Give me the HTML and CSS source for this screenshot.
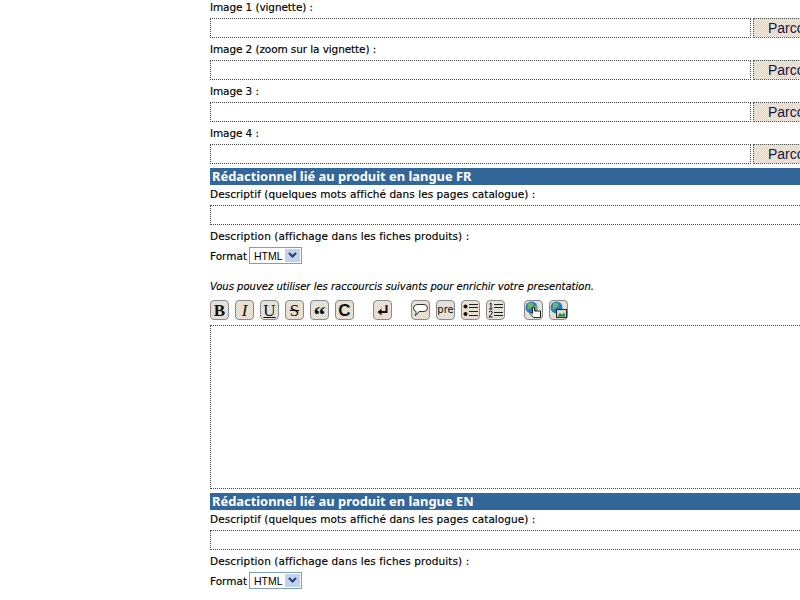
FILE: index.html
```html
<!DOCTYPE html>
<html lang="fr">
<head>
    <meta charset="UTF-8">
    <title>Produit</title>
    <link rel="stylesheet" href="styles.css">
</head>
<body>
    <form class="form">
        <div class="label">Image 1 (vignette) :</div>
        <div class="file-row"><input class="field file-field" type="text"><button class="browse" type="button">Parcourir...</button></div>
        <div class="label">Image 2 (zoom sur la vignette) :</div>
        <div class="file-row"><input class="field file-field" type="text"><button class="browse" type="button">Parcourir...</button></div>
        <div class="label">Image 3 :</div>
        <div class="file-row"><input class="field file-field" type="text"><button class="browse" type="button">Parcourir...</button></div>
        <div class="label">Image 4 :</div>
        <div class="file-row"><input class="field file-field" type="text"><button class="browse" type="button">Parcourir...</button></div>

        <h2 class="banner">Rédactionnel lié au produit en langue FR</h2>
        <div class="label after-banner">Descriptif (quelques mots affiché dans les pages catalogue) :</div>
        <input class="field wide-field" type="text">
        <div class="label desc-label">Description (affichage dans les fiches produits) :</div>
        <div class="format-row">Format <span class="select"><span class="select-value">HTML</span><span class="select-arrow"><svg width="9" height="7" viewBox="0 0 9 7"><path d="M1 1 4.500 4.500 8 1" fill="none" stroke="#2f3f6f" stroke-width="2.200"/></svg></span></span></div>
        <p class="hint">Vous pouvez utiliser les raccourcis suivants pour enrichir votre presentation.</p>
        <div class="toolbar">
            <div class="tool-group">
                <span class="tool tool-b">B</span>
                <span class="tool tool-i">I</span>
                <span class="tool tool-u">U</span>
                <span class="tool tool-s">S</span>
                <span class="tool tool-q">“</span>
                <span class="tool tool-c">C</span>
            </div>
            <div class="tool-group">
                <span class="tool"><svg width="13" height="13" viewBox="0 0 13 13"><path d="M10.500 1V8H3" fill="none" stroke="#111" stroke-width="2"/><path d="M5.500 4.500V11.500L1.500 8Z" fill="#111"/></svg></span>
            </div>
            <div class="tool-group">
                <span class="tool"><svg width="17" height="15" viewBox="0 0 17 15"><path d="M5 1.500H12Q15.500 1.500 15.500 5T12 8.500H7Q5.500 11.500 3 12.500 4.500 10.500 4 8.500 1.500 8 1.500 5T5 1.500Z" fill="#fff" stroke="#333"/></svg></span>
                <span class="tool tool-pre">pre</span>
                <span class="tool"><svg width="16" height="16" viewBox="0 0 16 16"><circle cx="2.500" cy="4.500" r="2" fill="#111"/><circle cx="2.500" cy="12" r="2" fill="#111"/><path d="M6 2.500H15M6 5.500H15M6 9.500H15M6 13.500H15" stroke="#222"/></svg></span>
                <span class="tool"><svg width="16" height="16" viewBox="0 0 16 16"><path d="M6 2.500H15M6 5.500H15M6 10.500H15M6 13.500H15" stroke="#222"/><path d="M1.500 2 3 1V7M1 7H4.500M1 10Q2.500 8.500 4 9.500T2.500 13L1 15H4.500" fill="none" stroke="#111"/></svg></span>
            </div>
            <div class="tool-group">
                <span class="tool"><svg width="17" height="18" viewBox="0 0 17 18"><circle cx="6.500" cy="6.500" r="6" fill="#2a78c8"/><path d="M3 2.500Q6 .5 8 2.500T6 7 2.500 8ZM9 5l3-.5 .5 3L10 9Z" fill="#6cb56a"/><path d="M7.500 6.500H9.500V10H15.500V16.500H8.500L5 12.500 6 11.500 7.500 12.500Z" fill="#fff" stroke="#222"/></svg></span>
                <span class="tool"><svg width="17" height="18" viewBox="0 0 17 18"><circle cx="6.500" cy="6.500" r="6" fill="#2a78c8"/><path d="M3 2.500Q6 .5 8 2.500T6 7 2.500 8Z" fill="#6cb56a"/><rect x="6.500" y="8.500" width="10" height="8" fill="#cfe3c8" stroke="#223"/><path d="M7.500 15.500 10 12 12 14 14 11.500 15.500 15.500Z" fill="#2f7a4a"/></svg></span>
            </div>
        </div>
        <textarea class="field editor"></textarea>

        <h2 class="banner">Rédactionnel lié au produit en langue EN</h2>
        <div class="label after-banner">Descriptif (quelques mots affiché dans les pages catalogue) :</div>
        <input class="field wide-field" type="text">
        <div class="label desc-label">Description (affichage dans les fiches produits) :</div>
        <div class="format-row">Format <span class="select"><span class="select-value">HTML</span><span class="select-arrow"><svg width="9" height="7" viewBox="0 0 9 7"><path d="M1 1 4.500 4.500 8 1" fill="none" stroke="#2f3f6f" stroke-width="2.200"/></svg></span></span></div>
    </form>
</body>
</html>
```

FILE: styles.css
```css
html, body {
    margin: 0;
    height: 600px;
    overflow: hidden;
    background-color: #fff;
}

body {
    font-family: 'DejaVu Sans', Verdana, sans-serif;
    font-size: 10.5px;
    color: #000;
    -webkit-text-stroke: 0.15px #000;
}

/* the form is wider than the window, the right side is cut off */
.form {
    width: 640px;
    margin-left: 210px;
}

.label {
    height: 14px;
    line-height: 14px;
    letter-spacing: -0.1px;
}

.file-row {
    display: flex;
    gap: 2px;
    margin-top: 4px;
    margin-bottom: 4px;
    height: 20px;
}

.field {
    display: block;
    box-sizing: border-box;
    margin: 0;
    padding: 0;
    background: #fff;
    border: 1px dotted #444;
    border-radius: 0;
    outline: none;
    resize: none;
}

.file-field {
    width: 541px;
    height: 20px;
}

.wide-field {
    width: 100%;
    height: 20px;
    margin-top: 4px;
}

.editor {
    width: 100%;
    height: 164px;
    margin-top: 5px;
}

/* dithered background of the old buttons */
.browse,
.tool {
    background-color: #ece9d8;
    background-image:
        repeating-conic-gradient(rgba(255, 190, 215, 0.35) 0 25%, rgba(190, 235, 200, 0.35) 0 50%),
        repeating-conic-gradient(#fdf8e4 0 25%, #d3d8cc 0 50%);
    background-size: 3px 3px, 2px 2px;
}

.browse {
    width: 90px;
    height: 20px;
    margin: 0;
    padding: 0 0 0 14px;
    border: 1px dotted #555;
    white-space: nowrap;
    text-align: left;
    font-family: 'Liberation Sans', Arial, sans-serif;
    font-size: 14px;
    color: #14143c;
    -webkit-text-stroke: 0;
}

.banner {
    height: 17px;
    line-height: 17px;
    margin: 0;
    padding-left: 2px;
    background-color: #336699;
    color: #fff;
    font-family: 'Noto Sans', 'DejaVu Sans', sans-serif;
    font-size: 12.9px;
    font-weight: bold;
    -webkit-text-stroke: 0;
}

.editor + .banner {
    margin-top: 4px;
}

.after-banner {
    margin-top: 2px;
    letter-spacing: 0.05px;
}

.desc-label {
    margin-top: 4px;
    letter-spacing: 0.1px;
}

.format-row {
    display: flex;
    align-items: center;
    gap: 2px;
    height: 17px;
    margin-top: 4px;
}

.select {
    box-sizing: border-box;
    display: flex;
    align-items: center;
    justify-content: space-between;
    width: 53px;
    height: 17px;
    padding: 1px;
    border: 1px solid #7f9db9;
    background: #fff;
    font-family: 'Liberation Sans', Arial, sans-serif;
    font-size: 10.5px;
    -webkit-text-stroke: 0;
}

.select-value {
    padding-left: 3px;
}

.select-arrow {
    display: flex;
    align-items: center;
    justify-content: center;
    width: 15px;
    height: 13px;
    background-color: #c1d2ee;
}

.hint {
    height: 14px;
    line-height: 14px;
    margin: 16px 0 0;
    font-size: 10px;
    font-style: italic;
}

.toolbar {
    display: flex;
    gap: 19px;
    margin-top: 6px;
    -webkit-text-stroke: 0;
}

.tool-group {
    display: flex;
    gap: 6px;
}

.tool {
    box-sizing: border-box;
    display: flex;
    align-items: center;
    justify-content: center;
    width: 19px;
    height: 20px;
    border: 1px solid #8a8a8a;
    border-radius: 4px;
    font-family: 'Liberation Serif', 'Times New Roman', serif;
    font-size: 17px;
    line-height: 1;
    color: #111;
}

.tool-b {
    font-weight: bold;
}

.tool-i {
    font-style: italic;
}

.tool-u {
    text-decoration: underline;
}

.tool-s {
    text-decoration: line-through;
}

.tool-q {
    font-size: 24px;
    font-weight: bold;
    padding-top: 7px;
}

.tool-c {
    font-family: 'Liberation Sans', Arial, sans-serif;
    font-size: 17px;
    font-weight: bold;
}

.tool-pre {
    font-family: 'DejaVu Sans', sans-serif;
    font-size: 10px;
}
```
